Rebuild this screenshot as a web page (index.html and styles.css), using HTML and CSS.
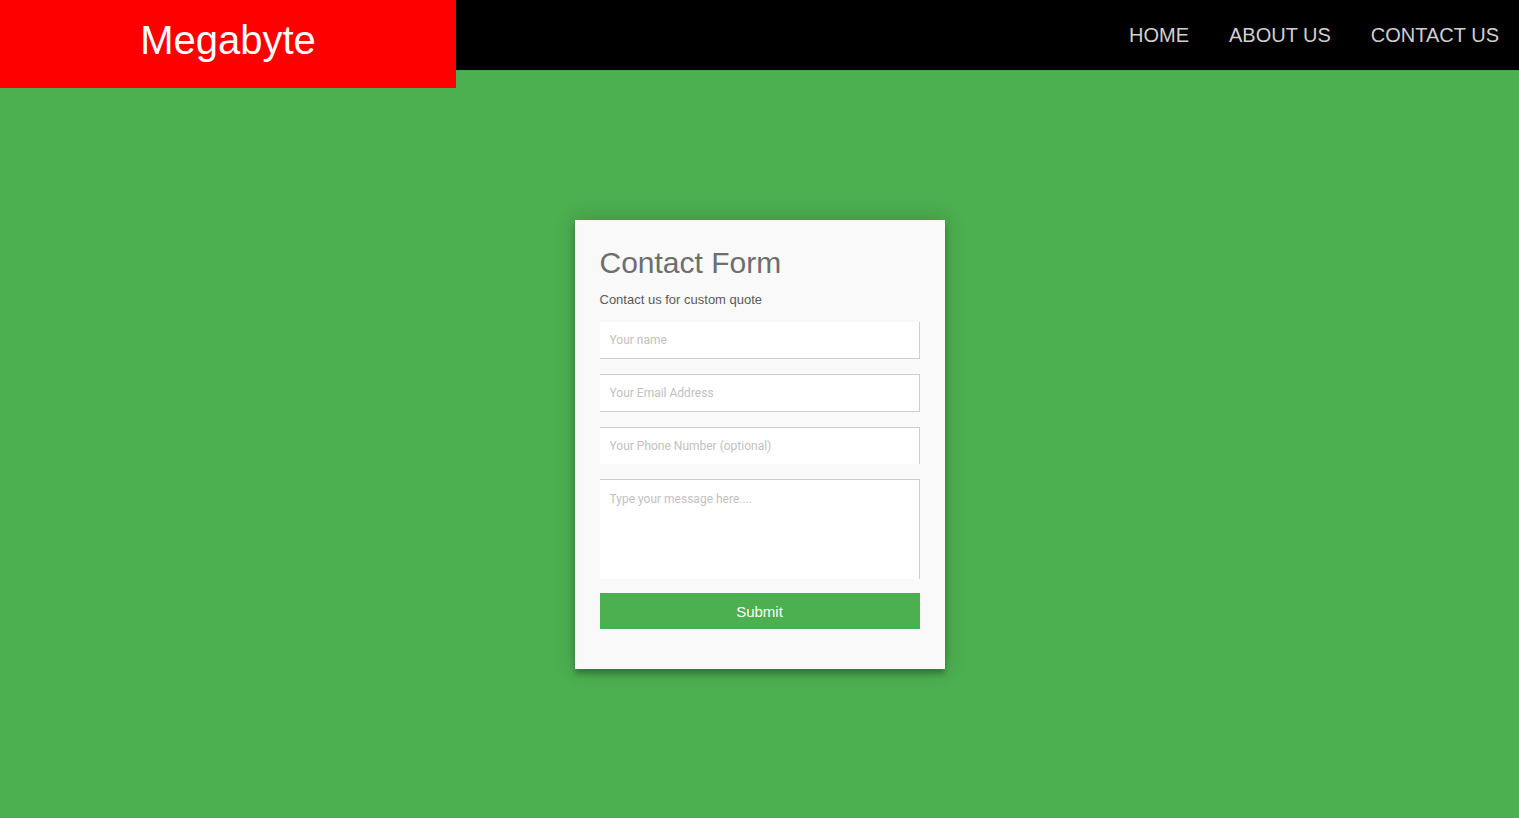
FILE: index.html
```html
<!DOCTYPE html>
<html lang="en">
<head>
<meta charset="utf-8">
<title>Megabyte</title>
<link rel="stylesheet" href="styles.css">
</head>
<body>
<header class="topbar">
  <div class="logo">Megabyte</div>
  <nav class="nav">
    <a href="#" class="nav-link">HOME</a>
    <a href="#" class="nav-link">ABOUT US</a>
    <a href="#" class="nav-link">CONTACT US</a>
  </nav>
</header>
<main class="main">
  <form class="card">
    <h3 class="card-title">Contact Form</h3>
    <h4 class="card-sub">Contact us for custom quote</h4>
    <input class="field field-name" type="text" placeholder="Your name">
    <input class="field field-email" type="email" placeholder="Your Email Address">
    <input class="field field-phone" type="tel" placeholder="Your Phone Number (optional)">
    <textarea class="field field-msg" placeholder="Type your message here...."></textarea>
    <button class="submit" type="button">Submit</button>
  </form>
</main>
</body>
</html>
```
FILE: styles.css
```css
* { box-sizing: border-box; }
html, body { margin: 0; padding: 0; }
body {
  background: #4caf50;
  font-family: "Liberation Sans", Arial, sans-serif;
  min-height: 818px;
}
.topbar {
  height: 70px;
  background: #000;
  display: flex;
  justify-content: space-between;
  align-items: flex-start;
}
.logo {
  width: 456px;
  height: 88px;
  background: #ff0000;
  color: #fff;
  font-size: 40px;
  line-height: 46px;
  padding-top: 17px;
  text-align: center;
  position: relative;
  z-index: 1;
}
.nav {
  display: flex;
  height: 70px;
  align-items: center;
}
.nav-link {
  color: #d0d0d0;
  text-decoration: none;
  font-size: 20px;
  padding: 0 20px;
}
.main {
  display: flex;
  justify-content: center;
  padding-top: 150px;
}
.card {
  width: 370px;
  background: #f9f9f9;
  padding: 25px 25px 40px;
  display: flex;
  flex-direction: column;
  box-shadow: 0 0 20px 0 rgba(0,0,0,0.2), 0 5px 5px 0 rgba(0,0,0,0.24);
}
.card-title {
  margin: 0;
  font-size: 30px;
  line-height: 35px;
  font-weight: 400;
  color: #6e6e6e;
}
.card-sub {
  margin: 12px 0 15px;
  font-size: 13px;
  line-height: 15px;
  font-weight: 400;
  color: #5a5a5a;
}
.field {
  display: block;
  width: 320px;
  height: 37px;
  margin: 0 0 15px;
  padding: 0 10px;
  background: #fff;
  border: 0 solid #cdcdcd;
  font-family: Roboto, "Liberation Sans", sans-serif;
  font-size: 12px;
  color: #555;
  outline: none;
}
.field::placeholder { color: #c2bfbf; }
.field-name { border-right-width: 1px; border-bottom-width: 1px; }
.field-email { border-top-width: 1px; border-right-width: 1px; border-bottom-width: 1px; height: 38px; }
.field-phone { border-top-width: 1px; border-right-width: 1px; }
.field-msg {
  border-top-width: 1px;
  border-right-width: 1px;
  height: 100px;
  padding: 12px 10px;
  resize: none;
  margin-bottom: 14px;
}
.submit {
  width: 320px;
  height: 36px;
  border: none;
  background: #4caf50;
  color: #fff;
  font-family: "Liberation Sans", Arial, sans-serif;
  font-size: 15px;
  cursor: pointer;
}
```
